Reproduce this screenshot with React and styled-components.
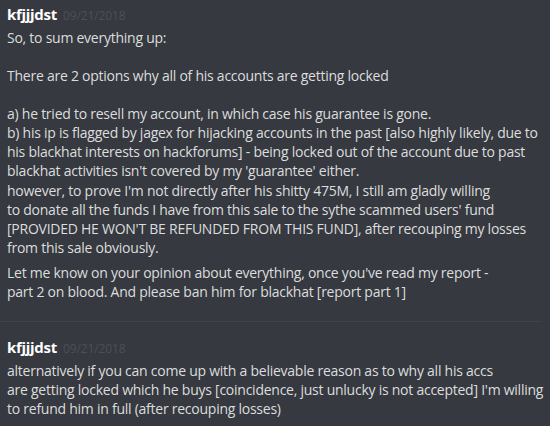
import React from "react";
import styled, { createGlobalStyle } from "styled-components";

const Global = createGlobalStyle`
  html, body { margin: 0; padding: 0; background: #36393f; }
  body { font-family: "Open Sans", "Noto Sans", sans-serif; }
`;

const Page = styled.div`
  width: 550px;
  height: 426px;
  background: #36393f;
  overflow: hidden;
  padding-top: 4px;
  box-sizing: border-box;
`;

const Group = styled.section`
  padding: 0 7px;
`;

const Header = styled.div`
  display: flex;
  align-items: baseline;
  gap: 6px;
  height: 24px;
`;

const Username = styled.span`
  color: #ffffff;
  font-weight: 700;
  font-size: 15px;
  letter-spacing: -0.3px;
`;

const Timestamp = styled.span`
  color: #4d5056;
  font-size: 12px;
  letter-spacing: -0.1px;
`;

const Message = styled.div`
  color: #dcddde;
  font-size: 14px;
  line-height: 19px;
  letter-spacing: -0.25px;
  margin-top: ${(p) => p.$gap || 0}px;
`;

const Line = styled.div`
  white-space: pre;
`;

const Divider = styled.hr`
  border: none;
  height: 1px;
  background: #3f4248;
  margin: ${(p) => p.$top}px 8px ${(p) => p.$bottom}px 0;
`;

const lines = (arr) => arr.map((t, i) => <Line key={i}>{t || "\u00a0"}</Line>);

export default function App() {
  return (
    <Page>
      <Global />
      <Group>
        <Header>
          <Username>kfjjjdst</Username>
          <Timestamp>09/21/2018</Timestamp>
        </Header>
        <Message>
          {lines([
            "So, to sum everything up:",
            "",
            "There are 2 options why all of his accounts are getting locked",
            "",
            "a) he tried to resell my account, in which case his guarantee is gone.",
            "b) his ip is flagged by jagex for hijacking accounts in the past [also highly likely, due to",
            "his blackhat interests on hackforums] - being locked out of the account due to past",
            "blackhat activities isn't covered by my 'guarantee' either.",
          ])}
        </Message>
        <Message $gap={1}>
          {lines([
            "however, to prove I'm not directly after his shitty 475M, I still am gladly willing",
            "to donate all the funds I have from this sale to the sythe scammed users' fund",
            "[PROVIDED HE WON'T BE REFUNDED FROM THIS FUND], after recouping my losses",
            "from this sale obviously.",
          ])}
        </Message>
        <Message $gap={6}>
          {lines([
            "Let me know on your opinion about everything, once you've read my report -",
            "part 2 on blood. And please ban him for blackhat [report part 1]",
          ])}
        </Message>
      </Group>
      <Divider $top={20} $bottom={15} />
      <Group>
        <Header>
          <Username>kfjjjdst</Username>
          <Timestamp>09/21/2018</Timestamp>
        </Header>
        <Message>
          {lines([
            "alternatively if you can come up with a believable reason as to why all his accs",
            "are getting locked which he buys [coincidence, just unlucky is not accepted] I'm willing",
            "to refund him in full (after recouping losses)",
          ])}
        </Message>
      </Group>
    </Page>
  );
}
